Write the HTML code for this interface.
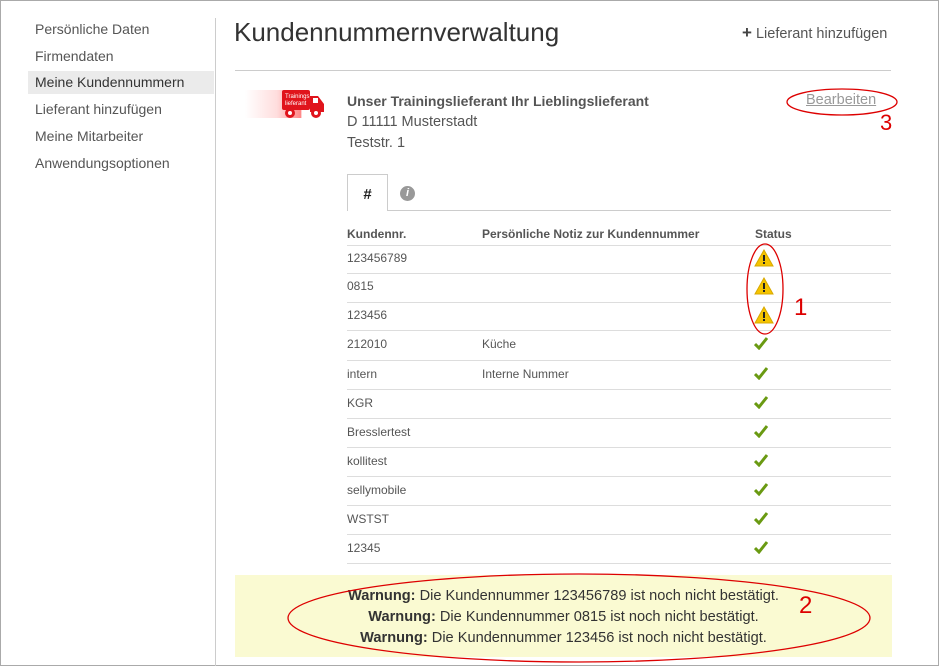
<!DOCTYPE html>
<html><head><meta charset="utf-8"><style>
*{margin:0;padding:0;box-sizing:border-box}
body{width:939px;height:666px;background:#fff;font-family:"Liberation Sans",sans-serif;color:#555;position:relative;overflow:hidden}
.frame{position:absolute;left:0;top:0;width:939px;height:666px;border:1px solid #aaa}
.a{position:absolute;white-space:nowrap}
.nav{left:28px;width:186px;height:23px;padding-left:7px;font-size:14px;line-height:23px;color:#555}
.row{position:absolute;left:347px;width:544px;border-top:1px solid #ddd;font-size:12px;color:#555}
.ck{position:absolute;left:754px;width:14px;height:14px}
</style></head><body>
<div class="frame"></div>
<div class="a" style="left:215px;top:18px;width:1px;height:648px;background:#ccc"></div>
<div class="a nav" style="top:18px">Persönliche Daten</div>
<div class="a nav" style="top:45px">Firmendaten</div>
<div class="a nav" style="top:71px;background:#ebebeb;color:#333">Meine Kundennummern</div>
<div class="a nav" style="top:98px">Lieferant hinzufügen</div>
<div class="a nav" style="top:125px">Meine Mitarbeiter</div>
<div class="a nav" style="top:152px">Anwendungsoptionen</div>

<div class="a" style="left:234px;top:17px;font-size:26px;color:#333">Kundennummernverwaltung</div>
<div class="a" style="left:742px;top:23px;font-size:14.5px;color:#555"><b style="font-size:17px;color:#444">+</b> Lieferant hinzufügen</div>
<div class="a" style="left:235px;top:70px;width:656px;height:1px;background:#ccc"></div>

<div class="a" style="left:245px;top:90px;width:80px;height:28px;background:linear-gradient(90deg,#fff,#fdd 40%,#f88 70%,#fff 71%)"></div>
<svg class="a" style="left:278px;top:88px" width="48" height="32" viewBox="0 0 48 32"><rect x="4" y="2" width="28" height="20" rx="2" fill="#e0141c"/><path d="M32 8h8l6 8v8H32z" fill="#e0141c"/><rect x="35" y="10" width="5" height="5" fill="#fff"/><circle cx="12" cy="25" r="5" fill="#e0141c"/><circle cx="12" cy="25" r="2" fill="#fff"/><circle cx="38" cy="25" r="5" fill="#e0141c"/><circle cx="38" cy="25" r="2" fill="#fff"/><text x="7" y="10" font-size="6" fill="#fff" font-family="Liberation Sans">Trainings</text><text x="7" y="17" font-size="6" fill="#fff" font-family="Liberation Sans">lieferant</text></svg>

<div class="a" style="left:347px;top:93px;font-size:14px;font-weight:bold;color:#555">Unser Trainingslieferant Ihr Lieblingslieferant</div>
<div class="a" style="left:347px;top:114px;font-size:14.5px">D 11111 Musterstadt</div>
<div class="a" style="left:347px;top:135px;font-size:14.5px">Teststr. 1</div>
<div class="a" style="left:806px;top:92px;font-size:14.5px;color:#999;text-decoration:underline">Bearbeiten</div>
<svg class="a" style="left:785px;top:86px" width="115" height="32"><ellipse cx="57" cy="16" rx="55" ry="13" fill="none" stroke="#d00" stroke-width="1.3"/></svg>
<div class="a" style="left:880px;top:110px;font-size:22px;color:#d00">3</div>

<div class="a" style="left:347px;top:174px;width:41px;height:37px;border:1px solid #ccc;border-bottom:none;background:#fff;text-align:center;font-weight:bold;font-size:15px;line-height:40px;color:#222">#</div>
<div class="a" style="left:388px;top:210px;width:503px;height:1px;background:#ccc"></div>
<div class="a" style="left:400px;top:186px;width:15px;height:15px;border-radius:50%;background:#999;color:#fff;font-size:11px;font-weight:bold;text-align:center;line-height:15px;font-style:italic">i</div>

<div class="a" style="left:347px;top:227px;font-size:12px;font-weight:bold;color:#555">Kundennr.</div>
<div class="a" style="left:482px;top:227px;font-size:12px;font-weight:bold;color:#555">Persönliche Notiz zur Kundennummer</div>
<div class="a" style="left:755px;top:227px;font-size:12px;font-weight:bold;color:#555">Status</div>

<div class="row" style="top:245px;height:28px"><span class="a" style="left:0;top:5px">123456789</span></div>
<div class="row" style="top:273px;height:29px"><span class="a" style="left:0;top:5px">0815</span></div>
<div class="row" style="top:302px;height:28px"><span class="a" style="left:0;top:5px">123456</span></div>
<div class="row" style="top:330px;height:30px"><span class="a" style="left:0;top:6px">212010</span><span class="a" style="left:135px;top:6px">Küche</span></div>
<div class="row" style="top:360px;height:29px"><span class="a" style="left:0;top:6px">intern</span><span class="a" style="left:135px;top:6px">Interne Nummer</span></div>
<div class="row" style="top:389px;height:29px"><span class="a" style="left:0;top:6px">KGR</span></div>
<div class="row" style="top:418px;height:29px"><span class="a" style="left:0;top:6px">Bresslertest</span></div>
<div class="row" style="top:447px;height:29px"><span class="a" style="left:0;top:6px">kollitest</span></div>
<div class="row" style="top:476px;height:29px"><span class="a" style="left:0;top:6px">sellymobile</span></div>
<div class="row" style="top:505px;height:29px"><span class="a" style="left:0;top:6px">WSTST</span></div>
<div class="row" style="top:534px;height:29px"><span class="a" style="left:0;top:6px">12345</span></div>
<div class="row" style="top:563px;height:1px"></div>

<svg class="a" style="left:754px;top:249px" width="20" height="18"><path d="M10 1L19 17H1z" fill="#f5c400" stroke="#d8a800"/><rect x="9" y="6" width="2" height="6" fill="#222"/><rect x="9" y="13" width="2" height="2" fill="#222"/></svg>
<svg class="a" style="left:754px;top:277px" width="20" height="18"><path d="M10 1L19 17H1z" fill="#f5c400" stroke="#d8a800"/><rect x="9" y="6" width="2" height="6" fill="#222"/><rect x="9" y="13" width="2" height="2" fill="#222"/></svg>
<svg class="a" style="left:754px;top:306px" width="20" height="18"><path d="M10 1L19 17H1z" fill="#f5c400" stroke="#d8a800"/><rect x="9" y="6" width="2" height="6" fill="#222"/><rect x="9" y="13" width="2" height="2" fill="#222"/></svg>
<svg class="a" style="left:744px;top:241px" width="42" height="96"><ellipse cx="21" cy="48" rx="18" ry="45" fill="none" stroke="#d00" stroke-width="1.3"/></svg>
<div class="a" style="left:794px;top:294px;font-size:24px;color:#d00">1</div>

<svg class="ck" style="top:336px" viewBox="0 0 14 14"><path d="M1 8l4 4L13 2" fill="none" stroke="#6a9a12" stroke-width="3"/></svg>
<svg class="ck" style="top:366px" viewBox="0 0 14 14"><path d="M1 8l4 4L13 2" fill="none" stroke="#6a9a12" stroke-width="3"/></svg>
<svg class="ck" style="top:395px" viewBox="0 0 14 14"><path d="M1 8l4 4L13 2" fill="none" stroke="#6a9a12" stroke-width="3"/></svg>
<svg class="ck" style="top:424px" viewBox="0 0 14 14"><path d="M1 8l4 4L13 2" fill="none" stroke="#6a9a12" stroke-width="3"/></svg>
<svg class="ck" style="top:453px" viewBox="0 0 14 14"><path d="M1 8l4 4L13 2" fill="none" stroke="#6a9a12" stroke-width="3"/></svg>
<svg class="ck" style="top:482px" viewBox="0 0 14 14"><path d="M1 8l4 4L13 2" fill="none" stroke="#6a9a12" stroke-width="3"/></svg>
<svg class="ck" style="top:511px" viewBox="0 0 14 14"><path d="M1 8l4 4L13 2" fill="none" stroke="#6a9a12" stroke-width="3"/></svg>
<svg class="ck" style="top:540px" viewBox="0 0 14 14"><path d="M1 8l4 4L13 2" fill="none" stroke="#6a9a12" stroke-width="3"/></svg>

<div class="a" style="left:235px;top:575px;width:657px;height:82px;background:#fafad2"></div>
<div class="a" style="left:235px;top:586px;width:657px;text-align:center;font-size:14.6px;line-height:21px;color:#333">
<div><b>Warnung:</b> Die Kundennummer 123456789 ist noch nicht bestätigt.</div>
<div><b>Warnung:</b> Die Kundennummer 0815 ist noch nicht bestätigt.</div>
<div><b>Warnung:</b> Die Kundennummer 123456 ist noch nicht bestätigt.</div></div>
<svg class="a" style="left:286px;top:571px" width="590" height="96"><ellipse cx="293" cy="47" rx="291" ry="44" fill="none" stroke="#d00" stroke-width="1.3"/></svg>
<div class="a" style="left:799px;top:592px;font-size:24px;color:#d00">2</div>
</body></html>
